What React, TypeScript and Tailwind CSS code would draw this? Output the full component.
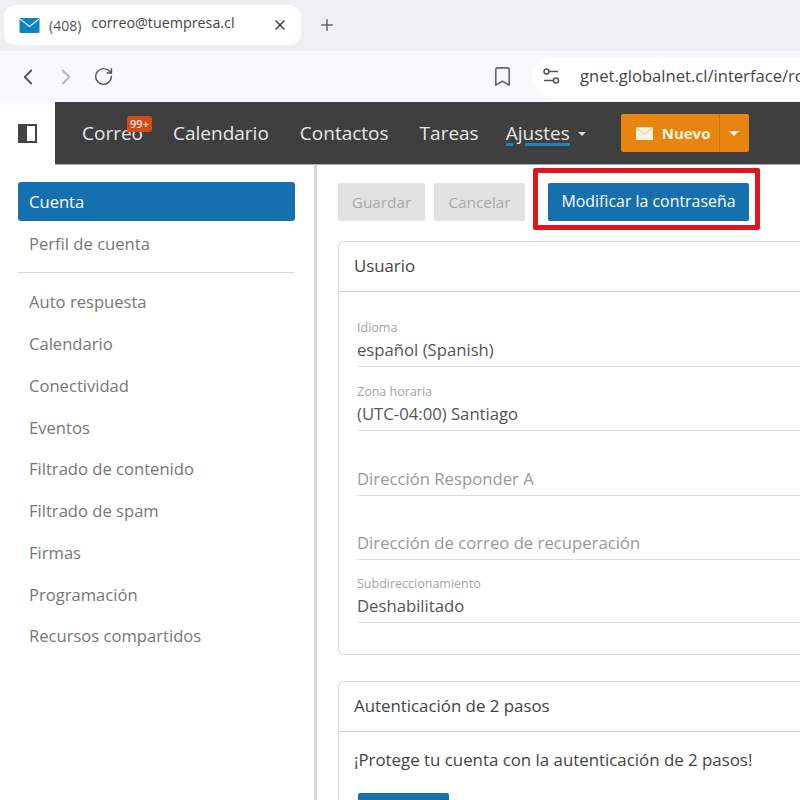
import React from 'react';
import { ChevronLeft, ChevronRight, RotateCw, Bookmark, Plus, X } from 'lucide-react';

const font = { fontFamily: '"Open Sans", "Noto Sans", sans-serif' };

const sideItems = [
  'Auto respuesta',
  'Calendario',
  'Conectividad',
  'Eventos',
  'Filtrado de contenido',
  'Filtrado de spam',
  'Firmas',
  'Programación',
  'Recursos compartidos',
];

function MailIcon({ className, fill, line }: { className: string; fill: string; line: string }) {
  return (
    <svg viewBox="0 0 20 15" className={className}>
      <rect width="20" height="15" rx="1" fill={fill} />
      <path d="M0.5 1 L10 8.5 L19.5 1" fill="none" stroke={line} strokeWidth="1.1" />
    </svg>
  );
}

function Field({ label, value, className }: { label?: string; value: string; className: string }) {
  return (
    <div className={className}>
      {label && <div className="h-[14px] text-[12.5px] leading-[14px] text-[#a3a3a3]">{label}</div>}
      <div
        className={`h-[32px] border-b border-[#dcdcdc] text-[16.7px] leading-[29px] ${
          label ? 'text-[#555]' : 'text-[#999]'
        }`}
      >
        {value}
      </div>
    </div>
  );
}

export default function App() {
  return (
    <div className="flex h-[800px] w-[800px] flex-col overflow-hidden bg-white" style={font}>
      {/* browser tabs */}
      <div className="flex h-[51px] shrink-0 items-start bg-[#eef0f3] pl-1 pt-[5px]">
        <div className="flex h-[40px] w-[297px] shrink-0 items-center rounded-xl bg-white pl-[15px] pr-[13px]">
          <MailIcon className="h-[15px] w-[21px] shrink-0" fill="#0a84c6" line="#e8f3fa" />
          <span className="ml-[9px] text-[14px] text-[#555]">(408)</span>
          <span className="ml-[10px] -translate-y-[2px] whitespace-nowrap text-[14.3px] text-[#444]">correo@tuempresa.cl</span>
          <X size={16} strokeWidth={2.4} className="ml-auto shrink-0 text-[#444]" />
        </div>
        <Plus size={18} strokeWidth={2} className="ml-[17px] mt-[11px] shrink-0 text-[#666]" />
      </div>

      {/* address bar */}
      <div className="flex h-[51px] shrink-0 items-center bg-[#f7f8fb] pl-[15px]">
        <ChevronLeft size={26} strokeWidth={1.7} className="shrink-0 text-[#555]" />
        <ChevronRight size={26} strokeWidth={1.7} className="ml-[12px] shrink-0 text-[#b5b7ba]" />
        <RotateCw size={21} strokeWidth={1.7} className="ml-[14px] shrink-0 text-[#555]" />
        <Bookmark size={23} strokeWidth={1.7} className="ml-[377px] shrink-0 text-[#666]" />
        <div className="ml-[18px] flex h-[40px] w-[300px] shrink-0 items-center rounded-l-[20px] bg-white pl-[11px]">
          <svg viewBox="0 0 17 17" className="h-[17px] w-[17px] shrink-0" fill="none" stroke="#555" strokeWidth="1.5">
            <circle cx="3.5" cy="3.5" r="2.5" />
            <path d="M6 3.5h9M1 12.5h9" />
            <circle cx="13" cy="12.5" r="2.5" />
          </svg>
          <span className="ml-[20px] whitespace-nowrap text-[16.6px] text-[#444]">gnet.globalnet.cl/interface/root</span>
        </div>
      </div>

      {/* app nav */}
      <div className="flex h-[63px] shrink-0">
        <div className="flex w-[55px] shrink-0 items-center justify-center bg-white">
          <div className="flex h-[19px] w-[19px] border-[2px] border-[#444]">
            <div className="h-full w-[7px] bg-[#444]" />
          </div>
        </div>
        <div className="flex flex-1 items-center border-b border-[#aaa] bg-[#3f3f3f] text-[19px] text-[#e8e8e8]">
          <div className="relative ml-[27px]">
            Correo
            <span className="absolute -top-[3px] left-[45px] flex h-[16px] w-[25px] items-center justify-center rounded-[2px] bg-[#d2491c] text-[11px] font-semibold text-[#f5e6dd]">
              99+
            </span>
          </div>
          <span className="ml-[30px]">Calendario</span>
          <span className="ml-[31px]">Contactos</span>
          <span className="ml-[31px]">Tareas</span>
          <span className="relative ml-[27px]">
            Ajustes
            <span className="absolute bottom-[1px] left-0 h-[3px] w-[7px] bg-[#1f84c6]" />
            <span className="absolute bottom-[1px] left-[19px] right-0 h-[3px] bg-[#1f84c6]" />
          </span>
          <span className="ml-[8px] mt-[2px] h-0 w-0 border-x-[4px] border-t-[4px] border-x-transparent border-t-[#ddd]" />
          <div className="ml-[35px] flex h-[38px] w-[128px] shrink-0 items-center rounded-[2px] bg-[#e8850f]">
            <div className="flex h-full w-[98px] items-center pl-[15px]">
              <MailIcon className="h-[13px] w-[17px] shrink-0" fill="#fdf3e3" line="#e8b878" />
              <span className="ml-[9px] text-[15px] font-bold text-[#fdf3e3]">Nuevo</span>
            </div>
            <div className="flex h-full flex-1 items-center justify-center border-l border-[#c9720b]">
              <span className="h-0 w-0 border-x-[5px] border-t-[5px] border-x-transparent border-t-[#fdf3e3]" />
            </div>
          </div>
        </div>
      </div>

      <div className="flex min-h-0 flex-1">
        {/* sidebar */}
        <div className="w-[317px] shrink-0 border-r-[3px] border-[#d9d9d9] pl-[18px] pr-[19px] pt-[17px] text-[16.6px] text-[#777]">
          <div className="flex h-[39px] items-center rounded-[3px] bg-[#1670ae] pl-[11px] pt-[2px] text-white">Cuenta</div>
          <div className="flex h-[46px] items-center pl-[11px]">Perfil de cuenta</div>
          <div className="mb-[9px] mr-[1px] mt-[5px] h-px bg-[#d5d5d5]" />
          {sideItems.map((item) => (
            <div key={item} className="flex h-[41.75px] items-center pl-[11px]">
              {item}
            </div>
          ))}
        </div>

        {/* content */}
        <div className="min-w-0 flex-1 pl-[21px]">
          <div className="flex h-[76px] items-center pb-[2px]">
            <button className="h-[38px] w-[87px] rounded-[2px] bg-[#e2e2e2] text-[15.3px] text-[#aaa]">Guardar</button>
            <button className="ml-[9px] h-[38px] w-[91px] rounded-[2px] bg-[#e2e2e2] text-[15.3px] text-[#aaa]">Cancelar</button>
            <div className="mb-[6px] ml-[8px] flex h-[62px] w-[227px] items-center rounded-[2px] border-[5px] border-[#e0141f] pl-[10px] pt-[6px]">
              <button className="h-[38px] w-[201px] shrink-0 rounded-[2px] bg-[#1670ae] text-[15.9px] font-medium whitespace-nowrap text-white">
                Modificar la contraseña
              </button>
            </div>
          </div>

          <div className="h-[414px] w-[600px] rounded-[6px] border border-[#d8d8d8]">
            <div className="flex h-[50px] items-center border-b border-[#d8d8d8] pb-[2px] pl-[15px] text-[16.8px] text-[#444]">Usuario</div>
            <div className="pl-[18px]">
              <Field className="mt-[29px]" label="Idioma" value="español (Spanish)" />
              <Field className="mt-[18px]" label="Zona horaria" value="(UTC-04:00) Santiago" />
              <Field className="mt-[33px]" value="Dirección Responder A" />
              <Field className="mt-[32px]" value="Dirección de correo de recuperación" />
              <Field className="mt-[17px]" label="Subdireccionamiento" value="Deshabilitado" />
            </div>
          </div>

          <div className="mt-[26px] w-[600px] rounded-[6px] border border-[#d8d8d8]">
            <div className="flex h-[50px] items-center border-b border-[#d8d8d8] pb-[2px] pl-[15px] text-[16.85px] text-[#444]">
              Autenticación de 2 pasos
            </div>
            <div className="pl-[15px] pt-[15px] text-[16.85px] text-[#444]">¡Protege tu cuenta con la autenticación de 2 pasos!</div>
            <div className="ml-[19px] mt-[21px] h-[38px] w-[91px] rounded-[2px] bg-[#1670ae]" />
          </div>
        </div>
      </div>
    </div>
  );
}
